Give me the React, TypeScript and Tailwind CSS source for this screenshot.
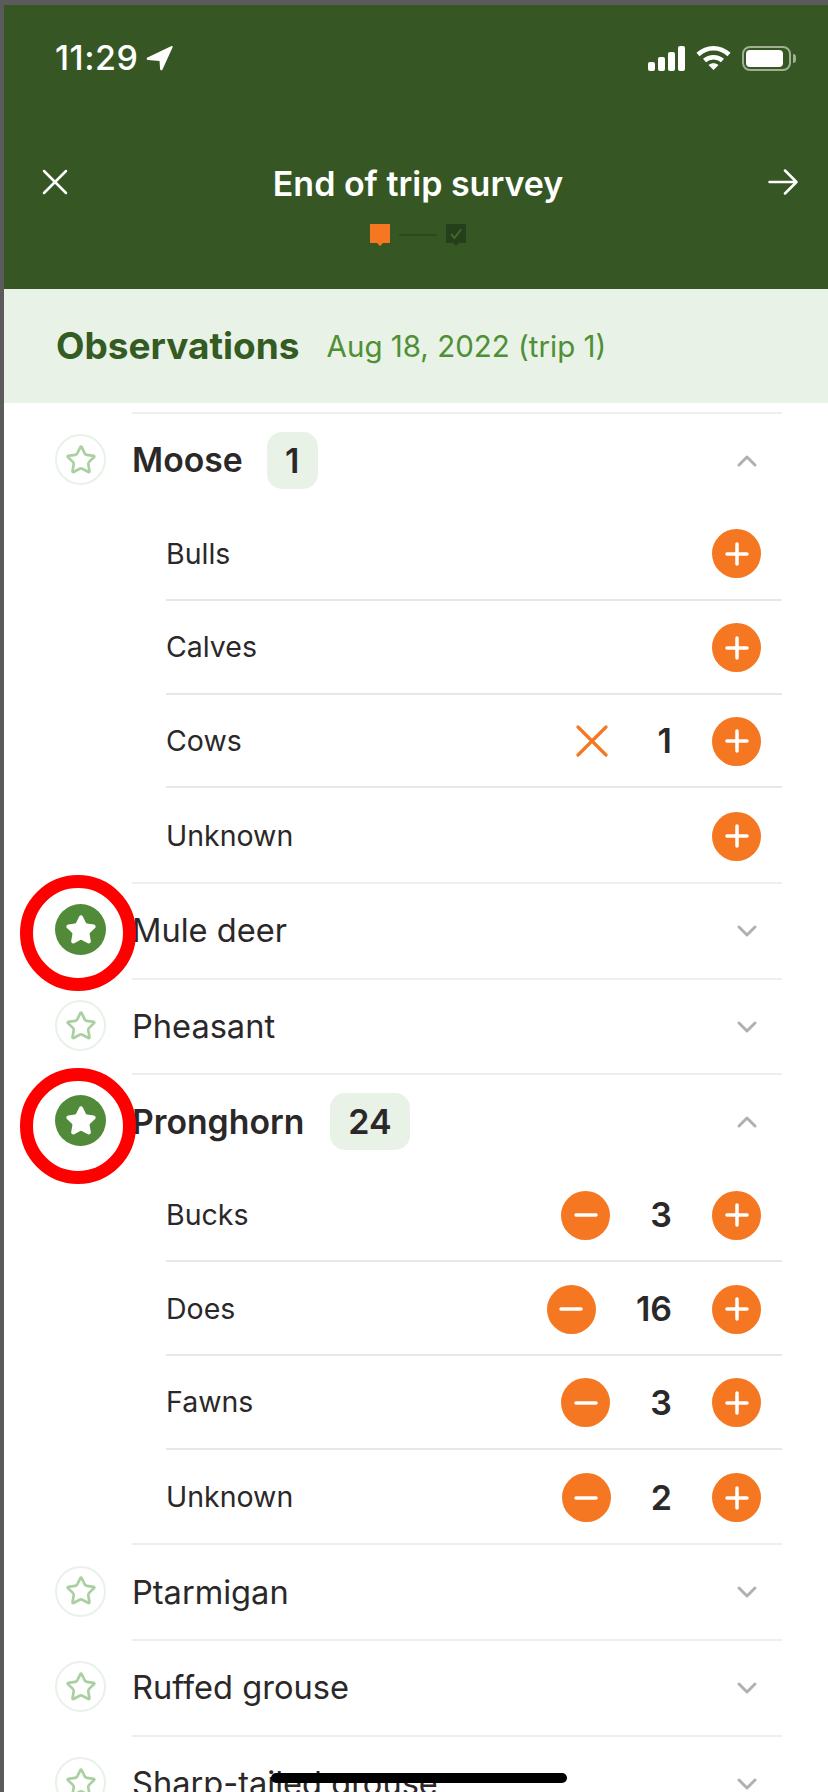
import { ChevronDown, ChevronUp, Star } from 'lucide-react'

interface SubRow {
  label: string
  count?: number
  clear?: boolean
}

interface Species {
  name: string
  total?: number
  starred?: boolean
  rows?: SubRow[]
}

const species: Species[] = [
  {
    name: 'Moose',
    total: 1,
    rows: [
      { label: 'Bulls' },
      { label: 'Calves' },
      { label: 'Cows', count: 1, clear: true },
      { label: 'Unknown' },
    ],
  },
  { name: 'Mule deer', starred: true },
  { name: 'Pheasant' },
  {
    name: 'Pronghorn',
    total: 24,
    starred: true,
    rows: [
      { label: 'Bucks', count: 3 },
      { label: 'Does', count: 16 },
      { label: 'Fawns', count: 3 },
      { label: 'Unknown', count: 2 },
    ],
  },
  { name: 'Ptarmigan' },
  { name: 'Ruffed grouse' },
  { name: 'Sharp-tailed grouse' },
]

function StatusBar() {
  return (
    <div className="flex h-[30px] items-center justify-between pl-[51px] pr-[32px]">
      <div className="flex items-center gap-[8px]">
        <span className="text-[34px] font-medium leading-none tracking-[0.5px] text-white">11:29</span>
        {/* Location arrow */}
        <svg width="27" height="25" viewBox="0 0 27 25">
          <path d="M26.500 1.500 16.500 23.500c-.6 1.300-2.300 1-2.400-.4L13.500 15 2 14C.5 13.900.2 12.300 1.500 11.600L25 .2c1.100-.5 2 .3 1.500 1.300Z" fill="#fff" />
        </svg>
      </div>
      <div className="flex items-center gap-[11px]">
        {/* Signal */}
        <svg width="37" height="25" viewBox="0 0 37 25" fill="#fff">
          <rect x="0" y="16" width="7" height="9" rx="2" />
          <rect x="10" y="11" width="7" height="14" rx="2" />
          <rect x="20" y="6" width="7" height="19" rx="2" />
          <rect x="30" y="0" width="7" height="25" rx="2" />
        </svg>
        {/* Wifi */}
        <svg width="35" height="26" viewBox="0 0 35 26" fill="none" stroke="#fff" strokeWidth="4.500">
          <path d="M2 9.500C11 1 24 1 33 9.500" />
          <path d="M8.500 15.500c5-4.500 13-4.500 18 0" />
          <path d="M17.500 25 12.500 20c3-2.500 7-2.500 10 0Z" fill="#fff" stroke="none" />
        </svg>
        {/* Battery */}
        <div className="flex items-center gap-[2px]">
          <div className="flex h-[25px] w-[49px] items-center rounded-[8px] border-2 border-[#9fb094] p-[2px]">
            <div className="h-full w-[37px] rounded-[4px] bg-white" />
          </div>
          <div className="h-[9px] w-[3px] rounded-r-full bg-[#9fb094]" />
        </div>
      </div>
    </div>
  )
}

function StepMarker({ className, done }: { className: string; done?: boolean }) {
  return (
    <svg width="20" height="22" viewBox="0 0 20 22" className={className}>
      <path d="M0 0h20v19h-7l-3 3-3-3H0Z" fill="currentColor" />
      {done && <path d="m5 10 3.500 4L15 5.500" fill="none" stroke="#3f6a2c" strokeWidth="2" />}
    </svg>
  )
}

function TopBar() {
  return (
    <div className="h-[284px] bg-[#365723] pt-[38px]">
      <StatusBar />
      <div className="mt-[91px] flex items-start justify-between pl-[38px] pr-[30px]">
        <svg width="26" height="26" viewBox="0 0 26 26" className="mt-[5px]" fill="none" stroke="#fff" strokeWidth="2.500" strokeLinecap="round">
          <path d="m2 2 22 22M24 2 2 24" />
        </svg>
        <div className="flex flex-col items-center">
          <h1 className="text-[34px] font-semibold leading-[40px] text-white">End of trip survey</h1>
          <div className="mt-[20px] flex items-center gap-[9px]">
            <StepMarker className="text-[#f57722]" />
            <div className="h-[2px] w-[38px] bg-[#2a4a1c]" />
            <StepMarker className="text-[#263f1b]" done />
          </div>
        </div>
        <svg width="30" height="26" viewBox="0 0 30 26" className="mt-[5px]" fill="none" stroke="#fff" strokeWidth="2.500" strokeLinecap="round" strokeLinejoin="round">
          <path d="M1.500 13h27M17 1.500 28.500 13 17 24.500" />
        </svg>
      </div>
    </div>
  )
}

function RoundButton({ kind }: { kind: 'plus' | 'minus' }) {
  return (
    <button className="flex h-[49px] w-[49px] shrink-0 items-center justify-center rounded-full bg-[#f57722]">
      <svg width="24" height="24" viewBox="0 0 24 24" fill="none" stroke="#fff" strokeWidth="3.500" strokeLinecap="round">
        <path d={kind === 'plus' ? 'M2 12h20M12 2v20' : 'M2 12h20'} />
      </svg>
    </button>
  )
}

function CountRow({ row, last }: { row: SubRow; last: boolean }) {
  return (
    <div className={`ml-[34px] flex h-[93.750px] items-center pr-[21px] pt-[2px] ${last ? '' : 'border-b-2 border-[#e7e7e7]'}`}>
      <span className="flex-1 text-[28.500px] text-[#2b2829]">{row.label}</span>
      {row.clear ? (
        <svg width="32" height="32" viewBox="0 0 32 32" className="mr-[50px]" fill="none" stroke="#f57722" strokeWidth="3.200" strokeLinecap="round">
          <path d="m2 2 28 28M30 2 2 30" />
        </svg>
      ) : row.count !== undefined ? (
        <div className="mr-[40px]">
          <RoundButton kind="minus" />
        </div>
      ) : null}
      {row.count !== undefined && (
        <span className="mr-[40px] text-[34px] font-semibold leading-none text-[#2b2829]">{row.count}</span>
      )}
      <RoundButton kind="plus" />
    </div>
  )
}

function SpeciesBlock({ item }: { item: Species }) {
  const open = !!item.rows
  return (
    <div className="flex pl-[51px] pr-[46px]">
      {/* Star column */}
      <div className={`relative flex w-[51px] shrink-0 items-center justify-center ${open ? 'h-[95px]' : 'h-[95.700px]'}`}>
        {item.starred ? (
          <>
            <div className="flex h-[51px] w-[51px] items-center justify-center rounded-full bg-[#518a38]">
              <Star size={32} fill="#fff" stroke="#fff" strokeWidth={2} />
            </div>
            <div className={`absolute left-[-35px] z-10 h-[116px] w-[116px] rounded-full border-[13px] border-[#fe0000] ${open ? 'top-[-5px]' : 'top-[-7px]'}`} />
          </>
        ) : (
          <div className="flex h-[51px] w-[51px] items-center justify-center rounded-full border-2 border-[#e8f2e7]">
            <Star size={32} fill="none" stroke="#a9d0a0" strokeWidth={2} />
          </div>
        )}
      </div>
      <div className="ml-[26px] min-w-0 flex-1">
        <div className={`flex items-center border-t-2 border-[#eeeeee] pr-[19px] ${open ? 'h-[95px]' : 'h-[95.700px]'}`}>
          <div className={`flex flex-1 items-center ${item.name === 'Moose' ? 'gap-[24px]' : 'gap-[26px]'}`}>
            <span className={`whitespace-nowrap text-[#2b2829] ${open ? 'text-[33.750px] font-semibold' : 'text-[32.600px]'}`}>
              {item.name}
            </span>
            {item.total !== undefined && (
              <span className="flex h-[57px] min-w-[51px] items-center justify-center rounded-[15px] bg-[#e8f2e7] px-[18px] text-[34px] font-semibold text-[#2b2829]">
                {item.total}
              </span>
            )}
          </div>
          {open ? <ChevronUp size={32} color="#b0b0b0" strokeWidth={2.250} /> : <ChevronDown size={32} color="#b0b0b0" strokeWidth={2.250} />}
        </div>
        {item.rows?.map((row, i) => (
          <CountRow key={row.label} row={row} last={i === item.rows!.length - 1} />
        ))}
      </div>
    </div>
  )
}

export default function App() {
  return (
    <div className="relative h-[1792px] w-[828px] overflow-hidden bg-[#5b5b5b] pl-[4px] pt-[5px] font-['Inter',sans-serif]">
      <div className="h-full bg-white">
        <TopBar />
        <div className="flex h-[114px] items-center gap-[27px] bg-[#e8f2e7] pl-[52px]">
          <h2 className="text-[37px] font-bold text-[#345b22]">Observations</h2>
          <span className="text-[29.500px] text-[#4f8f35]">Aug 18, 2022 (trip 1)</span>
        </div>
        <div className="pt-[9px]">
          {species.map(item => (
            <SpeciesBlock key={item.name} item={item} />
          ))}
        </div>
      </div>
      {/* Home indicator */}
      <div className="absolute bottom-[9px] left-[271px] z-20 h-[10px] w-[296px] rounded-full bg-black" />
    </div>
  )
}
